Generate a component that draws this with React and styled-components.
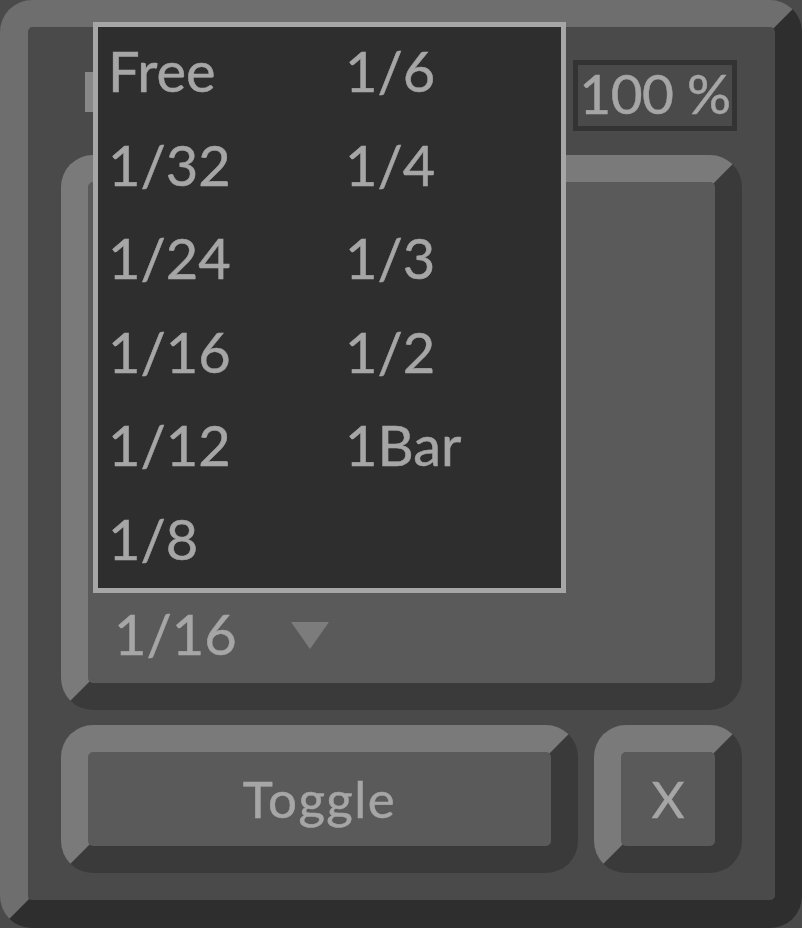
import React from "react";
import styled, { createGlobalStyle } from "styled-components";

const options = ["Free", "1/32", "1/24", "1/16", "1/12", "1/8", "1/6", "1/4", "1/3", "1/2", "1Bar"];

const GlobalStyle = createGlobalStyle`
  html, body {
    margin: 0;
    padding: 0;
    background: #4a4a4a;
  }
  body {
    font-family: Lato, "Liberation Sans", sans-serif;
    -webkit-text-stroke: 0.5px #a6a6a6;
  }
`;

const App = () => {
  return (
    <>
      <GlobalStyle />
      <Page>
        <Frame>
          <Header>
            <SyncPill />
            <NumberBox>100 %</NumberBox>
          </Header>
          <Panel>
            <Chooser>
              <ChooserValue>1/16</ChooserValue>
              <Arrow />
            </Chooser>
          </Panel>
          <ButtonRow>
            <Button>Toggle</Button>
            <Button $square>X</Button>
          </ButtonRow>
        </Frame>
        {/* open menu of the 1/16 chooser */}
        <Menu>
          {options.map((o) => (
            <MenuItem key={o}>{o}</MenuItem>
          ))}
        </Menu>
      </Page>
    </>
  );
};

const Page = styled.div`
  position: relative;
  width: 802px;
  height: 928px;
`;

const Frame = styled.div`
  box-sizing: border-box;
  width: 802px;
  height: 928px;
  border: 27px solid;
  border-color: #6e6e6e #2e2e2e #2e2e2e #6e6e6e;
  border-left-width: 28px;
  border-bottom-width: 28px;
  border-radius: 32px;
  background: #4a4a4a;
  padding: 33px 33px 0 33px;
  display: flex;
  flex-direction: column;
`;

const Header = styled.div`
  height: 71px;
  display: flex;
  align-items: flex-start;
  justify-content: space-between;
  padding-right: 5px;
  margin-bottom: 24px;
`;

const SyncPill = styled.div`
  width: 60px;
  height: 40px;
  margin-top: 12px;
  margin-left: 24px;
  background: #888888;
`;

const NumberBox = styled.div`
  box-sizing: border-box;
  width: 164px;
  height: 71px;
  border: 5px solid #333333;
  background: #4a4a4a;
  color: #a6a6a6;
  font-size: 55px;
  line-height: 57px;
  letter-spacing: -0.5px;
  text-align: center;
  white-space: nowrap;
`;

const Bevel = styled.div`
  box-sizing: border-box;
  border: 27px solid;
  border-color: #7a7a7a #3a3a3a #3a3a3a #7a7a7a;
  border-radius: 32px;
  background: #5a5a5a;
`;

const Panel = styled(Bevel)`
  height: 555px;
  display: flex;
  flex-direction: column;
  justify-content: flex-end;
  padding: 0 0 16px 26px;
`;

const Chooser = styled.div`
  display: flex;
  align-items: center;
  height: 67px;
`;

const ChooserValue = styled.span`
  color: #a6a6a6;
  font-size: 56px;
  line-height: 67px;
  width: 177px;
`;

const Arrow = styled.div`
  width: 0;
  height: 0;
  margin-top: 3px;
  border-left: 19px solid transparent;
  border-right: 19px solid transparent;
  border-top: 27px solid #7c7c7c;
`;

const ButtonRow = styled.div`
  display: flex;
  gap: 16px;
  margin-top: 15px;
`;

const Button = styled(Bevel)`
  flex: ${(p) => (p.$square ? "0 0 148px" : "1")};
  height: 148px;
  color: #a6a6a6;
  font-size: 51px;
  line-height: 94px;
  letter-spacing: ${(p) => (p.$square ? "0" : "1.5px")};
  text-align: center;
`;

const Menu = styled.div`
  position: absolute;
  left: 93px;
  top: 22px;
  box-sizing: border-box;
  width: 473px;
  height: 571px;
  border: 5px solid #a6a6a6;
  background: #2e2e2e;
  padding-left: 10px;
  display: grid;
  grid-auto-flow: column;
  grid-template-rows: repeat(6, 93.5px);
  grid-template-columns: 237px 1fr;
`;

const MenuItem = styled.div`
  color: #a6a6a6;
  font-size: 56px;
  line-height: 88px;
  white-space: nowrap;
`;

export default App;
